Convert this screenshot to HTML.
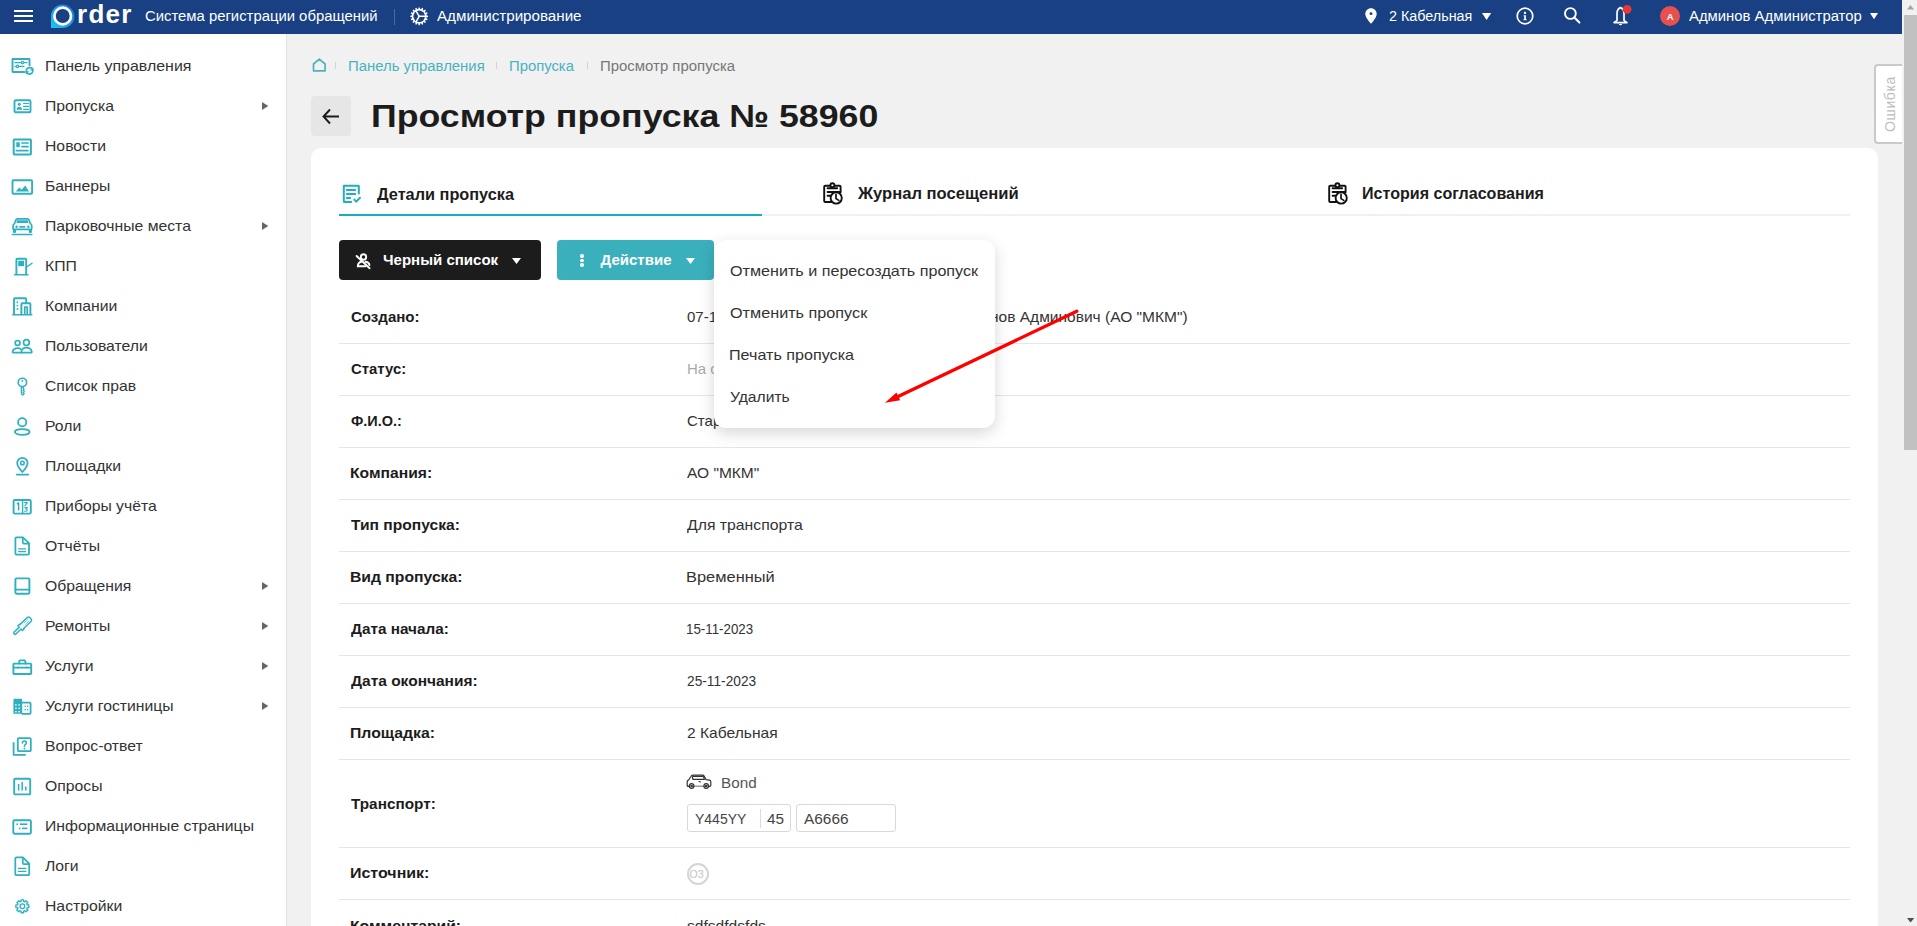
<!DOCTYPE html>
<html><head><meta charset="utf-8">
<style>
html,body{margin:0;padding:0;width:1917px;height:926px;overflow:hidden;background:#f1f1f1;font-family:"Liberation Sans",sans-serif;}
.t{position:absolute;white-space:nowrap;line-height:1;z-index:2;transform-origin:0 0;}
.abs{position:absolute;}
#hdr{position:absolute;left:0;top:0;width:1902px;height:34px;background:#184082;z-index:3;}
#side{position:absolute;left:0;top:34px;width:286px;height:892px;background:#fff;border-right:1px solid #e2e2e2;}
#card{position:absolute;left:311px;top:148px;width:1567px;height:800px;background:#fff;border-radius:10px;}
.sep{position:absolute;left:339px;width:1511px;height:1px;background:#e6e6e6;}
#dd{position:absolute;left:714px;top:240px;width:281px;height:188px;background:#fff;border-radius:12px;box-shadow:0 5px 16px rgba(0,0,0,0.16);z-index:5;}
svg{position:absolute;overflow:visible;}
</style></head><body>
<div id="hdr">
  <!-- hamburger -->
  <div class="abs" style="left:13.5px;top:9.5px;width:19px;height:2px;background:#fff"></div>
  <div class="abs" style="left:13.5px;top:15px;width:19px;height:2px;background:#fff"></div>
  <div class="abs" style="left:13.5px;top:20px;width:19px;height:2px;background:#fff"></div>
  <!-- logo -->
  <svg style="left:0;top:0" width="200" height="34">
    <defs><linearGradient id="lg" x1="0" y1="1" x2="1" y2="0"><stop offset="0" stop-color="#1ec8f0"/><stop offset="1" stop-color="#1a6fe0"/></linearGradient></defs>
    <path d="M51,28 L51,16 A11.7,11.7 0 1 1 62.7,28 Z" fill="url(#lg)"/>
    <circle cx="62.7" cy="16" r="8.3" fill="#184082" stroke="#fff" stroke-width="2.7"/>
  </svg>
  <div class="t" style="left:77px;top:0.8px;font-size:26px;font-weight:700;color:#fff;letter-spacing:1.3px;">rder</div>
  <!-- separator -->
  <div class="abs" style="left:393.5px;top:9px;width:1px;height:16px;background:#4a68a3"></div>
  <!-- gear -->
  <svg style="left:410px;top:7px" width="19" height="19" viewBox="0 0 19 19">
    <path d="M16.44,8.35 L18.08,8.68 L18.08,9.92 L16.44,10.25 L16.25,11.20 L17.64,12.12 L17.16,13.27 L15.53,12.94 L14.99,13.75 L15.92,15.14 L15.04,16.02 L13.65,15.09 L12.84,15.63 L13.17,17.26 L12.02,17.74 L11.10,16.35 L10.15,16.54 L9.82,18.18 L8.58,18.18 L8.25,16.54 L7.30,16.35 L6.38,17.74 L5.23,17.26 L5.56,15.63 L4.75,15.09 L3.36,16.02 L2.48,15.14 L3.41,13.75 L2.87,12.94 L1.24,13.27 L0.76,12.12 L2.15,11.20 L1.96,10.25 L0.32,9.92 L0.32,8.68 L1.96,8.35 L2.15,7.40 L0.76,6.48 L1.24,5.33 L2.87,5.66 L3.41,4.85 L2.48,3.46 L3.36,2.58 L4.75,3.51 L5.56,2.97 L5.23,1.34 L6.38,0.86 L7.30,2.25 L8.25,2.06 L8.58,0.42 L9.82,0.42 L10.15,2.06 L11.10,2.25 L12.02,0.86 L13.17,1.34 L12.84,2.97 L13.65,3.51 L15.04,2.58 L15.92,3.46 L14.99,4.85 L15.53,5.66 L17.16,5.33 L17.64,6.48 L16.25,7.40 Z" fill="#fff"/>
    <circle cx="9.2" cy="9.3" r="5.8" fill="#184082"/>
    <g stroke="#fff" stroke-width="1.5" stroke-linecap="round"><line x1="9.2" y1="9.3" x2="15" y2="9.3"/><line x1="9.2" y1="9.3" x2="6.3" y2="4.3"/><line x1="9.2" y1="9.3" x2="6.3" y2="14.3"/></g>
  </svg>
  <!-- pin -->
  <svg style="left:1365px;top:8px" width="12" height="16" viewBox="0 0 12 16">
    <path d="M6,0.3 C2.8,0.3 0.3,2.8 0.3,5.9 C0.3,9.8 6,15.7 6,15.7 C6,15.7 11.7,9.8 11.7,5.9 C11.7,2.8 9.2,0.3 6,0.3 Z M6,4.2 A1.45,1.45 0 1 1 6,7.1 A1.45,1.45 0 1 1 6,4.2 Z" fill="#fff" fill-rule="evenodd"/>
  </svg>
  <svg style="left:1481.8px;top:13px" width="10" height="8"><path d="M0,0 L9.2,0 L4.6,7 Z" fill="#fff"/></svg>
  <!-- info -->
  <svg style="left:1515.5px;top:6.5px" width="18" height="18" viewBox="0 0 18 18">
    <circle cx="9" cy="9" r="7.8" fill="none" stroke="#fff" stroke-width="1.7"/>
    <circle cx="9" cy="6" r="1.15" fill="#fff"/>
    <path d="M7.6,8.2 L9.9,8.2 L9.9,12.2 L10.7,12.2 L10.7,13.3 L7.4,13.3 L7.4,12.2 L8.2,12.2 L8.2,9.3 L7.6,9.3 Z" fill="#fff"/>
  </svg>
  <!-- search -->
  <svg style="left:1563px;top:6px" width="19" height="19" viewBox="0 0 19 19">
    <circle cx="7.4" cy="7.5" r="5.4" fill="none" stroke="#fff" stroke-width="1.9"/>
    <line x1="11.4" y1="11.6" x2="16.4" y2="16.6" stroke="#fff" stroke-width="2.1" stroke-linecap="round"/>
  </svg>
  <!-- bell -->
  <svg style="left:1611.5px;top:5px" width="22" height="22" viewBox="0 0 22 22">
    <path d="M8.5,2.6 Q5,3.8 5,8.5 L5,15.4 L2,17.6 L15,17.6 L12,15.4 L12,8.5 Q12,3.8 8.5,2.6 Z" fill="none" stroke="#fff" stroke-width="1.7" stroke-linejoin="round"/>
    <path d="M6.8,19 A1.8,1.8 0 0 0 10.2,19 Z" fill="#fff"/>
    <circle cx="15.1" cy="4.35" r="4.4" fill="#e8363a"/>
  </svg>
  <!-- avatar -->
  <div class="abs" style="left:1660px;top:6px;width:20px;height:20px;border-radius:50%;background:#e85050;"></div>
  <div class="t" style="left:1666.8px;top:11.5px;font-size:9.5px;font-weight:700;color:#fff;z-index:4">A</div>
  <svg style="left:1870px;top:13px" width="9" height="8"><path d="M0,0 L8,0 L4,6.2 Z" fill="#fff"/></svg>
</div>

<!-- scrollbar -->
<div class="abs" style="left:1902px;top:0;width:15px;height:926px;background:#f1f1f1;z-index:4"></div>
<div class="abs" style="left:1904px;top:15px;width:13px;height:435px;background:#c1c1c1;z-index:4"></div>
<svg style="left:1907px;top:4.5px;z-index:4" width="8" height="5"><path d="M0,4.5 L7,4.5 L3.5,0 Z" fill="#a3a3a3"/></svg>
<svg style="left:1907px;top:917.5px;z-index:4" width="8" height="5"><path d="M0,0 L7.2,0 L3.6,4.5 Z" fill="#505050"/></svg>

<!-- error tab -->
<div class="abs" style="left:1874px;top:64px;width:30px;height:76px;border:2px solid #c9c9c9;border-right:none;border-radius:4px 0 0 4px;background:#fff;z-index:3"></div>
<div class="t" style="left:1862px;top:97px;font-size:14px;color:#bdbdbd;transform:rotate(-90deg);transform-origin:50% 50%;width:56px;text-align:center;z-index:3;letter-spacing:0.6px">Ошибка</div>

<div id="side"></div>
<svg style="left:10px;top:53px" width="24" height="24" viewBox="0 0 24 24" fill="none" stroke="#2eb0bf" stroke-width="1.9" stroke-linecap="round" stroke-linejoin="round"><path d="M16.5,19 L3,19 Q2.5,19 2.5,18.5 L2.5,6.5 Q2.5,6 3,6 L19,6 Q19.5,6 19.5,6.5 L19.5,13"/>
<line x1="5" y1="9.6" x2="17" y2="9.6" stroke-width="1.3"/><circle cx="12.5" cy="9.6" r="1.2" fill="#fff" stroke-width="1.2"/>
<line x1="5" y1="13.4" x2="14" y2="13.4" stroke-width="1.3"/><circle cx="7.6" cy="13.4" r="1.2" fill="#fff" stroke-width="1.2"/>
<circle cx="19.5" cy="17.8" r="4.8" fill="#fff" stroke="none"/><path d="M16.3,17 A3.3,3.3 0 0 1 22.5,16.5 M22.7,18.6 A3.3,3.3 0 0 1 16.5,19.2" stroke-width="1.8"/>
<path d="M22.6,15 L23.2,17.3 L21,17" stroke-width="1.2"/><path d="M16.4,20.6 L15.8,18.3 L18,18.6" stroke-width="1.2"/></svg>
<svg style="left:10px;top:93px" width="24" height="24" viewBox="0 0 24 24" fill="none" stroke="#2eb0bf" stroke-width="1.9" stroke-linecap="round" stroke-linejoin="round"><rect x="4.5" y="7.3" width="16" height="12" rx="1.3"/>
<circle cx="9.3" cy="11.3" r="1.5" fill="#2eb0bf" stroke="none"/><path d="M6.5,16.8 Q6.8,13.7 9.3,13.7 Q11.8,13.7 12.1,16.8 Z" fill="#2eb0bf" stroke="none"/>
<line x1="13.6" y1="10.5" x2="18.4" y2="10.5" stroke-width="1.2"/><line x1="13.6" y1="13.4" x2="18.4" y2="13.4" stroke-width="1.2"/><line x1="13.6" y1="16.3" x2="18.4" y2="16.3" stroke-width="1.2"/></svg>
<svg style="left:10px;top:133px" width="24" height="24" viewBox="0 0 24 24" fill="none" stroke="#2eb0bf" stroke-width="1.9" stroke-linecap="round" stroke-linejoin="round"><rect x="3.7" y="6.5" width="17.2" height="15" rx="0.8" stroke-width="2"/>
<rect x="6.3" y="9.2" width="3.4" height="5" fill="#2eb0bf" stroke="none"/>
<line x1="12" y1="10" x2="18" y2="10" stroke-width="1.7"/><line x1="12" y1="13.6" x2="18" y2="13.6" stroke-width="1.7"/><line x1="6.3" y1="17.6" x2="18" y2="17.6" stroke-width="1.7"/></svg>
<svg style="left:10px;top:173px" width="24" height="24" viewBox="0 0 24 24" fill="none" stroke="#2eb0bf" stroke-width="1.9" stroke-linecap="round" stroke-linejoin="round"><rect x="2.5" y="7.2" width="19.6" height="13.6" rx="1"/>
<path d="M5.8,18.4 L9.3,14.4 L11.6,16.7 L15.2,12.4 L19,18.4 Z" fill="#2eb0bf" stroke="none"/></svg>
<svg style="left:10px;top:213px" width="24" height="24" viewBox="0 0 24 24" fill="none" stroke="#2eb0bf" stroke-width="1.9" stroke-linecap="round" stroke-linejoin="round"><path d="M5.2,16.4 L4,16.4 Q3.1,16.4 3.1,15.4 L3.1,12.6 Q3.1,11.2 4.4,10.8 L5.9,6.9 Q6.4,5.8 7.6,5.8 L17.2,5.8 Q18.4,5.8 18.9,6.9 L20.4,10.8 Q21.7,11.2 21.7,12.6 L21.7,15.4 Q21.7,16.4 20.8,16.4 Z" stroke-width="1.7"/>
<path d="M7.1,7.2 L17.7,7.2 L18.4,10 L6.4,10 Z" fill="#2eb0bf" stroke="none"/>
<circle cx="6.6" cy="13.8" r="1.25" fill="#2eb0bf" stroke="none"/><circle cx="18.3" cy="13.8" r="1.25" fill="#2eb0bf" stroke="none"/><rect x="9.3" y="13" width="5.9" height="1.7" fill="#2eb0bf" stroke="none"/>
<path d="M2.9,16 L6,16 L6,18.9 Q6,19.9 5,19.9 L3.9,19.9 Q2.9,19.9 2.9,18.9 Z" fill="#2eb0bf" stroke="none"/><path d="M18.8,16 L21.9,16 L21.9,18.9 Q21.9,19.9 20.9,19.9 L19.8,19.9 Q18.8,19.9 18.8,18.9 Z" fill="#2eb0bf" stroke="none"/>
<line x1="2.4" y1="21.5" x2="21.8" y2="21.5" stroke-width="1.6"/></svg>
<svg style="left:10px;top:253px" width="24" height="24" viewBox="0 0 24 24" fill="none" stroke="#2eb0bf" stroke-width="1.9" stroke-linecap="round" stroke-linejoin="round"><path d="M6.4,21.2 L6.4,6.8 Q6.4,5.8 7.4,5.8 L15.2,5.8 Q16.2,5.8 16.2,6.8 L16.2,21.2"/>
<rect x="8.2" y="7.7" width="5.8" height="5.5" fill="#2eb0bf" stroke="none"/>
<line x1="16.3" y1="14.3" x2="22" y2="10.2" stroke-width="1.4"/><line x1="4.6" y1="21.8" x2="18" y2="21.8" stroke-width="1.4"/></svg>
<svg style="left:10px;top:293px" width="24" height="24" viewBox="0 0 24 24" fill="none" stroke="#2eb0bf" stroke-width="1.9" stroke-linecap="round" stroke-linejoin="round"><path d="M4,21.3 L4,6.2 Q4,5.3 5,5.3 L15.3,5.3 Q16.2,5.3 16.2,6.2 L16.2,10"/>
<path d="M11.4,21.3 L11.4,11 Q11.4,10.2 12.2,10.2 L19.6,10.2 Q20.4,10.2 20.4,11 L20.4,21.3"/><path d="M14.8,21.3 L14.8,14 L17.2,14 L17.2,21.3" stroke-width="1.6"/>
<line x1="2.8" y1="21.8" x2="21.8" y2="21.8" stroke-width="1.4"/>
<circle cx="7.4" cy="9.2" r="0.9" fill="#2eb0bf" stroke="none"/><circle cx="7.4" cy="12.6" r="0.9" fill="#2eb0bf" stroke="none"/><circle cx="7.4" cy="16" r="0.9" fill="#2eb0bf" stroke="none"/></svg>
<svg style="left:10px;top:333px" width="24" height="24" viewBox="0 0 24 24" fill="none" stroke="#2eb0bf" stroke-width="1.9" stroke-linecap="round" stroke-linejoin="round"><circle cx="7.6" cy="9.9" r="2.4" stroke-width="1.7"/><path d="M11.4,19.6 L3.4,19.6 Q2.2,19.6 2.6,18.4 Q3.8,15.2 7.6,15.2 Q9.5,15.2 10.8,16" stroke-width="1.7"/>
<circle cx="16.4" cy="9.6" r="2.9" stroke-width="1.7"/><path d="M11.2,19.4 Q12,14.6 16.4,14.6 Q20.8,14.6 21.8,18.6 Q22,19.6 21,19.6 L12.2,19.6 Q11,19.6 11.2,19.4 Z" stroke-width="1.7"/></svg>
<svg style="left:10px;top:373px" width="24" height="24" viewBox="0 0 24 24" fill="none" stroke="#2eb0bf" stroke-width="1.9" stroke-linecap="round" stroke-linejoin="round"><circle cx="12.4" cy="9.4" r="4.2" stroke-width="1.6"/><circle cx="12.4" cy="8" r="0.9" fill="#2eb0bf" stroke="none"/>
<path d="M11.4,13.4 L11.4,20.8 L12.8,22 L14.2,20.6 L13.2,19.6 L14.2,18.6 L13.2,17.6 L14,16.4 L13.4,15.6 L13.4,13.4" stroke-width="1.4"/></svg>
<svg style="left:10px;top:413px" width="24" height="24" viewBox="0 0 24 24" fill="none" stroke="#2eb0bf" stroke-width="1.9" stroke-linecap="round" stroke-linejoin="round"><circle cx="12.2" cy="9.2" r="4.1" stroke-width="1.8"/><ellipse cx="12.2" cy="19" rx="7.4" ry="2.8" stroke-width="1.8"/></svg>
<svg style="left:10px;top:453px" width="24" height="24" viewBox="0 0 24 24" fill="none" stroke="#2eb0bf" stroke-width="1.9" stroke-linecap="round" stroke-linejoin="round"><path d="M12.4,19 Q7.2,13.5 7.2,10 A5.2,5.2 0 0 1 17.6,10 Q17.6,13.5 12.4,19 Z" stroke-width="1.8"/><circle cx="12.4" cy="10" r="1.8" stroke-width="1.5"/>
<line x1="6.6" y1="21.6" x2="18.4" y2="21.6" stroke-width="1.6"/></svg>
<svg style="left:10px;top:493px" width="24" height="24" viewBox="0 0 24 24" fill="none" stroke="#2eb0bf" stroke-width="1.9" stroke-linecap="round" stroke-linejoin="round"><rect x="3.6" y="7" width="17.2" height="13.6" rx="1.2" stroke-width="1.9"/><line x1="12.6" y1="7" x2="12.6" y2="20.6" stroke-width="1.4"/>
<path d="M7,11 L8.6,10 L8.6,17.6" stroke-width="1.5" stroke-linecap="butt"/><path d="M14.6,9.6 L17.4,9.6 L14.8,12.8 M14.8,14.6 L17.4,14.6 L15.8,16 Q17.6,16.4 17,17.8 Q16.2,18.6 14.6,18" stroke-width="1.1"/></svg>
<svg style="left:10px;top:533px" width="24" height="24" viewBox="0 0 24 24" fill="none" stroke="#2eb0bf" stroke-width="1.9" stroke-linecap="round" stroke-linejoin="round"><path d="M12.8,4.4 L6.6,4.4 Q5.4,4.4 5.4,5.6 L5.4,20.4 Q5.4,21.6 6.6,21.6 L17.8,21.6 Q19,21.6 19,20.4 L19,10.2 Z" stroke-width="1.8"/><path d="M12.8,4.6 L12.8,9.4 Q12.8,10.6 14,10.6 L18.8,10.6" stroke-width="1.7"/>
<line x1="8.6" y1="15.8" x2="15.6" y2="15.8" stroke-width="1.3"/><line x1="8.6" y1="18.6" x2="15.6" y2="18.6" stroke-width="1.3"/></svg>
<svg style="left:10px;top:573px" width="24" height="24" viewBox="0 0 24 24" fill="none" stroke="#2eb0bf" stroke-width="1.9" stroke-linecap="round" stroke-linejoin="round"><rect x="5.4" y="5.4" width="14" height="15.4" rx="1.2" stroke-width="1.9"/><line x1="5.4" y1="16.6" x2="19.4" y2="16.6" stroke-width="1.8"/></svg>
<svg style="left:10px;top:613px" width="24" height="24" viewBox="0 0 24 24" fill="none" stroke="#2eb0bf" stroke-width="1.9" stroke-linecap="round" stroke-linejoin="round"><g transform="translate(12.2,13.15) rotate(-43.7)"><path d="M-11.2,0 Q-11.2,-1.3 -9.9,-1.3 L-2.8,-1.3 L-2.8,-3.3 L-0.6,-3.3 L-0.6,-2.7 L9.3,-2.7 Q11.3,-2.7 11.3,-0.7 L11.3,0.7 Q11.3,2.7 9.3,2.7 L-0.6,2.7 L-0.6,3.3 L-2.8,3.3 L-2.8,1.3 L-9.9,1.3 Q-11.2,1.3 -11.2,0 Z" stroke-width="1.45"/>
<path d="M3.6,-1 L8.4,-1 M3.6,1 L8.4,1" stroke-width="0.9" stroke-dasharray="1,0.8" opacity="0.75"/></g></svg>
<svg style="left:10px;top:653px" width="24" height="24" viewBox="0 0 24 24" fill="none" stroke="#2eb0bf" stroke-width="1.9" stroke-linecap="round" stroke-linejoin="round"><path d="M9.2,10.6 L9.2,8.4 Q9.2,7.4 10.2,7.4 L14.4,7.4 Q15.4,7.4 15.4,8.4 L15.4,10.6" stroke-width="1.8"/><rect x="3.4" y="10.6" width="17.8" height="10.4" rx="0.8" stroke-width="1.9"/>
<line x1="3.4" y1="14.6" x2="21.2" y2="14.6" stroke-width="1.6"/><circle cx="8" cy="14.6" r="1" fill="#2eb0bf" stroke="none"/><circle cx="16.6" cy="14.6" r="1" fill="#2eb0bf" stroke="none"/></svg>
<svg style="left:10px;top:693px" width="24" height="24" viewBox="0 0 24 24" fill="none" stroke="#2eb0bf" stroke-width="1.9" stroke-linecap="round" stroke-linejoin="round"><path d="M3.4,20.8 L3.4,7 Q3.4,5.8 4.6,5.8 L11,5.8 Q12.2,5.8 12.2,7 L12.2,20.8 Z" fill="#2eb0bf" stroke="none"/>
<path d="M12.2,9.6 L19.6,9.6 Q20.6,9.6 20.6,10.6 L20.6,19.8 Q20.6,20.8 19.6,20.8 L12.2,20.8" stroke-width="1.8"/>
<g fill="#fff" stroke="none"><rect x="5.2" y="11.2" width="1.4" height="1.4"/><rect x="8.4" y="11.2" width="1.4" height="1.4"/><rect x="5.2" y="14.6" width="1.4" height="1.4"/><rect x="8.4" y="14.6" width="1.4" height="1.4"/><rect x="5.2" y="18" width="1.4" height="1.4"/><rect x="8.4" y="18" width="1.4" height="1.4"/></g>
<g fill="#2eb0bf" stroke="none"><rect x="14.6" y="12.6" width="1.3" height="1.3"/><rect x="17" y="12.6" width="1.3" height="1.3"/><rect x="14.6" y="16" width="1.3" height="1.3"/><rect x="17" y="16" width="1.3" height="1.3"/></g></svg>
<svg style="left:10px;top:733px" width="24" height="24" viewBox="0 0 24 24" fill="none" stroke="#2eb0bf" stroke-width="1.9" stroke-linecap="round" stroke-linejoin="round"><rect x="7.8" y="5.2" width="13" height="13" rx="1" stroke-width="1.8"/><path d="M3.6,9.2 L3.6,21.8 L15.8,21.8" stroke-width="1.8" stroke-linecap="butt"/>
<path d="M12.4,10 Q12.6,8 14.4,8 Q16.4,8 16.4,9.8 Q16.4,11 15,11.8 Q14.4,12.2 14.4,13.4" stroke-width="1.6"/><circle cx="14.4" cy="15.6" r="0.95" fill="#2eb0bf" stroke="none"/></svg>
<svg style="left:10px;top:773px" width="24" height="24" viewBox="0 0 24 24" fill="none" stroke="#2eb0bf" stroke-width="1.9" stroke-linecap="round" stroke-linejoin="round"><rect x="4.2" y="5.8" width="16" height="15.6" rx="1" stroke-width="1.9"/><line x1="8.6" y1="11" x2="8.6" y2="17.6" stroke-width="1.5" stroke-linecap="butt"/><line x1="12.2" y1="9" x2="12.2" y2="17.6" stroke-width="1.5" stroke-linecap="butt"/><line x1="15.8" y1="13.6" x2="15.8" y2="17.6" stroke-width="1.5" stroke-linecap="butt"/></svg>
<svg style="left:10px;top:813px" width="24" height="24" viewBox="0 0 24 24" fill="none" stroke="#2eb0bf" stroke-width="1.9" stroke-linecap="round" stroke-linejoin="round"><rect x="3.3" y="7.3" width="17.6" height="13.4" rx="1.2" stroke-width="1.9"/><circle cx="7.2" cy="11.2" r="0.9" fill="#2eb0bf" stroke="none"/><line x1="9.8" y1="11.2" x2="17.4" y2="11.2" stroke-width="1.6" stroke-linecap="butt"/>
<circle cx="9.6" cy="15.4" r="0.9" fill="#2eb0bf" stroke="none"/><line x1="12" y1="15.4" x2="17.4" y2="15.4" stroke-width="1.6" stroke-linecap="butt"/></svg>
<svg style="left:10px;top:853px" width="24" height="24" viewBox="0 0 24 24" fill="none" stroke="#2eb0bf" stroke-width="1.9" stroke-linecap="round" stroke-linejoin="round"><path d="M12.8,4.35 L6.6,4.35 Q5.3,4.35 5.3,5.65 L5.3,20.9 Q5.3,22.2 6.6,22.2 L17.9,22.2 Q19.2,22.2 19.2,20.9 L19.2,10.7 Z" stroke-width="1.75"/><path d="M12.8,4.6 L12.8,10 Q12.8,11.2 14,11.2 L19,11.2" stroke-width="1.7"/>
<line x1="8.4" y1="15.4" x2="15.8" y2="15.4" stroke-width="1.3"/><line x1="8.4" y1="18.4" x2="15.8" y2="18.4" stroke-width="1.3"/></svg>
<svg style="left:10px;top:893px" width="24" height="24" viewBox="0 0 24 24" fill="none" stroke="#2eb0bf" stroke-width="1.9" stroke-linecap="round" stroke-linejoin="round"><path d="M11.03,8.45 L11.05,6.80 L13.67,6.80 L13.69,8.45 L14.82,8.92 L16.01,7.77 L17.86,9.62 L16.71,10.81 L17.18,11.94 L18.83,11.96 L18.83,14.58 L17.18,14.60 L16.71,15.73 L17.86,16.92 L16.01,18.77 L14.82,17.62 L13.69,18.09 L13.67,19.74 L11.05,19.74 L11.03,18.09 L9.90,17.62 L8.71,18.77 L6.86,16.92 L8.01,15.73 L7.54,14.60 L5.89,14.58 L5.89,11.96 L7.54,11.94 L8.01,10.81 L6.86,9.62 L8.71,7.77 L9.90,8.92 Z" stroke-width="1.35"/><circle cx="12.36" cy="13.27" r="2.35" stroke-width="1.35"/></svg>
<svg style="left:262px;top:102px" width="7" height="8"><path d="M0,0 L6.3,4 L0,8 Z" fill="#666"/></svg>
<svg style="left:262px;top:222px" width="7" height="8"><path d="M0,0 L6.3,4 L0,8 Z" fill="#666"/></svg>
<svg style="left:262px;top:582px" width="7" height="8"><path d="M0,0 L6.3,4 L0,8 Z" fill="#666"/></svg>
<svg style="left:262px;top:622px" width="7" height="8"><path d="M0,0 L6.3,4 L0,8 Z" fill="#666"/></svg>
<svg style="left:262px;top:662px" width="7" height="8"><path d="M0,0 L6.3,4 L0,8 Z" fill="#666"/></svg>
<svg style="left:262px;top:702px" width="7" height="8"><path d="M0,0 L6.3,4 L0,8 Z" fill="#666"/></svg>
<div id="card"></div>

<!-- breadcrumb -->
<svg style="left:312px;top:58px" width="15" height="14" viewBox="0 0 15 14">
  <path d="M1.5,12.8 L1.5,6 L7.3,1.2 L13.1,6 L13.1,12.8 Z" fill="none" stroke="#49b2bf" stroke-width="1.7" stroke-linejoin="round"/>
</svg>
<div class="abs" style="left:335px;top:62px;width:1px;height:7px;background:#d3d3d3"></div>
<div class="abs" style="left:496px;top:62px;width:1px;height:7px;background:#d3d3d3"></div>
<div class="abs" style="left:587px;top:62px;width:1px;height:7px;background:#d3d3d3"></div>

<!-- back button -->
<div class="abs" style="left:311px;top:96px;width:40px;height:40px;border-radius:4px;background:#e6e6e6"></div>
<svg style="left:322px;top:108px" width="18" height="18" viewBox="0 0 18 18">
  <path d="M8,1.5 L1.5,8.5 L8,15.5 M1.5,8.5 L17,8.5" fill="none" stroke="#1c1c1c" stroke-width="1.9"/>
</svg>

<!-- tabs -->
<div class="abs" style="left:339px;top:213.5px;width:423px;height:2.2px;background:#17aebf;z-index:2"></div>
<div class="abs" style="left:762px;top:214px;width:1088px;height:2px;background:#f0f0f0"></div>

<!-- buttons -->
<div class="abs" style="left:339px;top:240px;width:202px;height:40px;border-radius:4px;background:#1c1c1c"></div>
<div class="abs" style="left:557px;top:240px;width:157px;height:40px;border-radius:4px;background:#3ab0bd"></div>
<svg style="left:511.5px;top:257.5px" width="9" height="6"><path d="M0,0 L9,0 L4.5,6 Z" fill="#fff"/></svg>
<svg style="left:686px;top:257.5px" width="9" height="6"><path d="M0,0 L9,0 L4.5,6 Z" fill="#fff"/></svg>
<div class="abs" style="left:580px;top:254px;width:3.5px;height:3.5px;border-radius:50%;background:#fff"></div>
<div class="abs" style="left:580px;top:258.5px;width:3.5px;height:3.5px;border-radius:50%;background:#fff"></div>
<div class="abs" style="left:580px;top:263px;width:3.5px;height:3.5px;border-radius:50%;background:#fff"></div>

<!-- table separators -->
<div class="sep" style="top:343px"></div>
<div class="sep" style="top:395px"></div>
<div class="sep" style="top:447px"></div>
<div class="sep" style="top:499px"></div>
<div class="sep" style="top:551px"></div>
<div class="sep" style="top:603px"></div>
<div class="sep" style="top:655px"></div>
<div class="sep" style="top:707px"></div>
<div class="sep" style="top:759px"></div>
<div class="sep" style="top:847px"></div>
<div class="sep" style="top:899px"></div>

<!-- plates -->
<div class="abs" style="left:687px;top:804px;width:102px;height:26px;border:1px solid #d9d9d9;border-radius:3px;background:#fff"></div>
<div class="abs" style="left:760px;top:809px;width:1px;height:19px;background:#dcdcdc;z-index:2"></div>
<div class="abs" style="left:796px;top:804px;width:98px;height:26px;border:1px solid #d9d9d9;border-radius:3px;background:#fff"></div>
<!-- source circle -->
<div class="abs" style="left:687px;top:863px;width:18px;height:18px;border:2px solid #d5d5d5;border-radius:50%;"></div>
<div class="t" style="left:689.6px;top:868.5px;font-size:10.5px;color:#c4c4c4;font-weight:400;letter-spacing:-0.3px">ОЗ</div>


<!-- tab icons -->
<svg style="left:336px;top:178px" width="30" height="30" viewBox="0 0 30 30" fill="none" stroke="#1fb0c0" stroke-width="2" stroke-linecap="round" stroke-linejoin="round">
  <path d="M15.2,24 L8.2,24 Q7.8,24 7.8,23.6 L7.8,8.2 Q7.8,7.8 8.2,7.8 L22.4,7.8 Q22.8,7.8 22.8,8.2 L22.8,15.6"/>
  <line x1="10.8" y1="12" x2="19.2" y2="12"/><line x1="10.8" y1="15.9" x2="19.2" y2="15.9"/><line x1="10.8" y1="19.9" x2="14.2" y2="19.9"/>
  <path d="M18.4,21.6 L20.2,23.6 L24,19.8"/>
</svg>
<svg style="left:818px;top:178px" width="30" height="30" viewBox="0 0 30 30" fill="none" stroke="#111" stroke-width="1.9" stroke-linecap="round" stroke-linejoin="round">
  <path d="M13.2,24 L7.2,24 Q6.2,24 6.2,23 L6.2,8.8 Q6.2,7.8 7.2,7.8 L21.6,7.8 Q22.6,7.8 22.6,8.8 L22.6,14.2"/>
  <circle cx="14.4" cy="7.2" r="2" fill="#fff"/>
  <line x1="9.6" y1="10.2" x2="19.2" y2="10.2"/><line x1="9.6" y1="14" x2="21.6" y2="14"/><line x1="9.6" y1="17.8" x2="13.2" y2="17.8"/>
  <circle cx="18.2" cy="20" r="5.6" fill="#fff"/><path d="M18,16.4 L18,20.6 L20.8,22.4" stroke-width="1.7"/>
</svg>
<svg style="left:1322.5px;top:178px" width="30" height="30" viewBox="0 0 30 30" fill="none" stroke="#111" stroke-width="1.9" stroke-linecap="round" stroke-linejoin="round">
  <path d="M13.2,24 L7.2,24 Q6.2,24 6.2,23 L6.2,8.8 Q6.2,7.8 7.2,7.8 L21.6,7.8 Q22.6,7.8 22.6,8.8 L22.6,14.2"/>
  <circle cx="14.4" cy="7.2" r="2" fill="#fff"/>
  <line x1="9.6" y1="10.2" x2="19.2" y2="10.2"/><line x1="9.6" y1="14" x2="21.6" y2="14"/><line x1="9.6" y1="17.8" x2="13.2" y2="17.8"/>
  <circle cx="18.2" cy="20" r="5.6" fill="#fff"/><path d="M18,16.4 L18,20.6 L20.8,22.4" stroke-width="1.7"/>
</svg>
<!-- blacklist icon -->
<svg style="left:350px;top:248px" width="26" height="26" viewBox="0 0 26 26" fill="none" stroke="#fff" stroke-width="1.9" stroke-linecap="round" stroke-linejoin="round">
  <circle cx="13.5" cy="9" r="2.7"/>
  <path d="M7.8,18.2 Q8,14.4 11.4,13.8 M15.6,13.8 Q19.2,14.4 19.4,17" /><path d="M7.8,18.3 L15.6,18.3"/>
  <line x1="6.6" y1="8" x2="19.6" y2="20.2"/>
</svg>
<!-- car icon -->
<svg style="left:682px;top:766px" width="32" height="26" viewBox="0 0 32 26" fill="none" stroke="#333" stroke-width="1.2" stroke-linecap="round" stroke-linejoin="round">
  <path d="M7.4,20.4 L6,20.4 Q5.2,20.4 5.2,19.4 L5.2,15.4 Q5.4,14.2 6.8,13.8 L8.6,11 Q9.4,9.2 11,9.2 L20.2,9.2 Q21.6,9.2 22.4,10.4 L24,13.6 L27.6,14.2 Q28.8,14.5 28.8,15.8 L28.8,19.2 Q28.8,20.4 27.8,20.4 L26.4,20.4"/>
  <path d="M11.8,20.2 L22,20.2" stroke="#999" stroke-width="1.6"/>
  <path d="M10.8,13.4 L10.4,11.2 Q10.6,10.4 11.6,10.4 L20.4,10.4 Q21.4,10.4 21.8,11.4 L22.4,13.4 Z"/>
  <circle cx="9.6" cy="20" r="2.3"/><circle cx="9.6" cy="20" r="0.7" fill="#333"/>
  <circle cx="24.2" cy="20" r="2.3"/><circle cx="24.2" cy="20" r="0.7" fill="#333"/>
  <path d="M16.8,15.4 L18.6,16" stroke-width="1"/>
</svg>

<div id="dd"></div>

<div class="t" id="t0" style="left:145.00px;top:9.00px;font-size:14px;font-weight:400;color:#fff;transform:scaleX(1.0607);z-index:4;">Система регистрации обращений</div>
<div class="t" id="t1" style="left:437.00px;top:9.00px;font-size:14px;font-weight:400;color:#fff;transform:scaleX(1.0827);z-index:4;">Администрирование</div>
<div class="t" id="t2" style="left:1388.50px;top:9.00px;font-size:14px;font-weight:400;color:#fff;transform:scaleX(1.0247);z-index:4;">2 Кабельная</div>
<div class="t" id="t3" style="left:1689.00px;top:9.00px;font-size:14px;font-weight:400;color:#fff;transform:scaleX(1.0613);z-index:4;">Админов Администратор</div>
<div class="t" id="t4" style="left:45.44px;top:58.00px;font-size:15px;font-weight:400;color:#333;transform:scaleX(1.0625);">Панель управления</div>
<div class="t" id="t5" style="left:45.00px;top:98.00px;font-size:15px;font-weight:400;color:#333;transform:scaleX(1.0500);">Пропуска</div>
<div class="t" id="t6" style="left:45.00px;top:138.00px;font-size:15px;font-weight:400;color:#333;transform:scaleX(1.0500);">Новости</div>
<div class="t" id="t7" style="left:45.00px;top:178.00px;font-size:15px;font-weight:400;color:#333;transform:scaleX(1.0500);">Баннеры</div>
<div class="t" id="t8" style="left:45.00px;top:218.00px;font-size:15px;font-weight:400;color:#333;transform:scaleX(1.0500);">Парковочные места</div>
<div class="t" id="t9" style="left:45.00px;top:258.00px;font-size:15px;font-weight:400;color:#333;transform:scaleX(1.0500);">КПП</div>
<div class="t" id="t10" style="left:45.00px;top:298.00px;font-size:15px;font-weight:400;color:#333;transform:scaleX(1.0500);">Компании</div>
<div class="t" id="t11" style="left:45.00px;top:338.00px;font-size:15px;font-weight:400;color:#333;transform:scaleX(1.0500);">Пользователи</div>
<div class="t" id="t12" style="left:45.00px;top:378.00px;font-size:15px;font-weight:400;color:#333;transform:scaleX(1.0500);">Список прав</div>
<div class="t" id="t13" style="left:45.00px;top:418.00px;font-size:15px;font-weight:400;color:#333;transform:scaleX(1.0500);">Роли</div>
<div class="t" id="t14" style="left:45.00px;top:458.00px;font-size:15px;font-weight:400;color:#333;transform:scaleX(1.0500);">Площадки</div>
<div class="t" id="t15" style="left:45.00px;top:498.00px;font-size:15px;font-weight:400;color:#333;transform:scaleX(1.0500);">Приборы учёта</div>
<div class="t" id="t16" style="left:45.00px;top:538.00px;font-size:15px;font-weight:400;color:#333;transform:scaleX(1.0500);">Отчёты</div>
<div class="t" id="t17" style="left:45.00px;top:578.00px;font-size:15px;font-weight:400;color:#333;transform:scaleX(1.0500);">Обращения</div>
<div class="t" id="t18" style="left:45.00px;top:618.00px;font-size:15px;font-weight:400;color:#333;transform:scaleX(1.0500);">Ремонты</div>
<div class="t" id="t19" style="left:45.00px;top:658.00px;font-size:15px;font-weight:400;color:#333;transform:scaleX(1.0500);">Услуги</div>
<div class="t" id="t20" style="left:45.00px;top:698.00px;font-size:15px;font-weight:400;color:#333;transform:scaleX(1.0500);">Услуги гостиницы</div>
<div class="t" id="t21" style="left:45.00px;top:738.00px;font-size:15px;font-weight:400;color:#333;transform:scaleX(1.0500);">Вопрос-ответ</div>
<div class="t" id="t22" style="left:45.00px;top:778.00px;font-size:15px;font-weight:400;color:#333;transform:scaleX(1.0500);">Опросы</div>
<div class="t" id="t23" style="left:45.00px;top:818.00px;font-size:15px;font-weight:400;color:#333;transform:scaleX(1.0500);">Информационные страницы</div>
<div class="t" id="t24" style="left:45.00px;top:858.00px;font-size:15px;font-weight:400;color:#333;transform:scaleX(1.0500);">Логи</div>
<div class="t" id="t25" style="left:45.00px;top:898.00px;font-size:15px;font-weight:400;color:#333;transform:scaleX(1.0500);">Настройки</div>
<div class="t" id="t26" style="left:347.64px;top:59.00px;font-size:14px;font-weight:400;color:#49b2bf;transform:scaleX(1.0630);">Панель управления</div>
<div class="t" id="t27" style="left:509.14px;top:59.00px;font-size:14px;font-weight:400;color:#49b2bf;transform:scaleX(1.0590);">Пропуска</div>
<div class="t" id="t28" style="left:600.13px;top:59.00px;font-size:14px;font-weight:400;color:#777;transform:scaleX(1.0667);">Просмотр пропуска</div>
<div class="t" id="t29" style="left:371.27px;top:100.00px;font-size:32px;font-weight:700;color:#1c1c1c;transform:scaleX(1.1164);">Просмотр пропуска № 58960</div>
<div class="t" id="t30" style="left:376.60px;top:187.00px;font-size:16px;font-weight:700;color:#1c1c1c;transform:scaleX(1.0178);">Детали пропуска</div>
<div class="t" id="t31" style="left:858.00px;top:186.00px;font-size:16px;font-weight:700;color:#1c1c1c;transform:scaleX(1.0370);">Журнал посещений</div>
<div class="t" id="t32" style="left:1361.60px;top:186.00px;font-size:16px;font-weight:700;color:#1c1c1c;transform:scaleX(1.0039);">История согласования</div>
<div class="t" id="t33" style="left:382.80px;top:252.00px;font-size:15px;font-weight:700;color:#fff;transform:scaleX(1.0017);">Черный список</div>
<div class="t" id="t34" style="left:600.60px;top:252.00px;font-size:15px;font-weight:700;color:#fff;">Действие</div>
<div class="t" id="t35" style="left:351.30px;top:309.00px;font-size:15px;font-weight:700;color:#1c1c1c;transform:scaleX(1.0030);">Создано:</div>
<div class="t" id="t36" style="left:351.30px;top:361.00px;font-size:15px;font-weight:700;color:#1c1c1c;transform:scaleX(0.9926);">Статус:</div>
<div class="t" id="t37" style="left:351.30px;top:413.00px;font-size:15px;font-weight:700;color:#1c1c1c;transform:scaleX(0.9635);">Ф.И.О.:</div>
<div class="t" id="t38" style="left:350.26px;top:465.00px;font-size:15px;font-weight:700;color:#1c1c1c;transform:scaleX(1.0442);">Компания:</div>
<div class="t" id="t39" style="left:351.30px;top:517.00px;font-size:15px;font-weight:700;color:#1c1c1c;transform:scaleX(1.0404);">Тип пропуска:</div>
<div class="t" id="t40" style="left:350.25px;top:569.00px;font-size:15px;font-weight:700;color:#1c1c1c;transform:scaleX(1.0476);">Вид пропуска:</div>
<div class="t" id="t41" style="left:351.30px;top:621.00px;font-size:15px;font-weight:700;color:#1c1c1c;transform:scaleX(1.0200);">Дата начала:</div>
<div class="t" id="t42" style="left:351.30px;top:673.00px;font-size:15px;font-weight:700;color:#1c1c1c;transform:scaleX(1.0328);">Дата окончания:</div>
<div class="t" id="t43" style="left:350.25px;top:725.00px;font-size:15px;font-weight:700;color:#1c1c1c;transform:scaleX(1.0506);">Площадка:</div>
<div class="t" id="t44" style="left:351.30px;top:796.00px;font-size:15px;font-weight:700;color:#1c1c1c;transform:scaleX(1.0207);">Транспорт:</div>
<div class="t" id="t45" style="left:350.23px;top:865.00px;font-size:15px;font-weight:700;color:#1c1c1c;transform:scaleX(1.0653);">Источник:</div>
<div class="t" id="t46" style="left:350.25px;top:918.00px;font-size:15px;font-weight:700;color:#1c1c1c;transform:scaleX(1.0481);">Комментарий:</div>
<div class="t" id="t47" style="left:687.00px;top:309.00px;font-size:15px;font-weight:400;color:#333;">07-11-2023 15:42 Админов Админ</div>
<div class="t" id="t48" style="left:990.47px;top:309.00px;font-size:15px;font-weight:400;color:#333;transform:scaleX(1.0344);">нов Админович (АО "МКМ")</div>
<div class="t" id="t49" style="left:687.00px;top:361.00px;font-size:15px;font-weight:400;color:#aaa;">На согласовании</div>
<div class="t" id="t50" style="left:687.00px;top:413.00px;font-size:15px;font-weight:400;color:#333;">Старостин Алексей</div>
<div class="t" id="t51" style="left:687.00px;top:465.00px;font-size:15px;font-weight:400;color:#333;transform:scaleX(1.0343);">АО "МКМ"</div>
<div class="t" id="t52" style="left:687.00px;top:517.00px;font-size:15px;font-weight:400;color:#333;transform:scaleX(1.0518);">Для транспорта</div>
<div class="t" id="t53" style="left:685.90px;top:569.00px;font-size:15px;font-weight:400;color:#333;transform:scaleX(1.0950);">Временный</div>
<div class="t" id="t54" style="left:686.11px;top:621.00px;font-size:15px;font-weight:400;color:#333;transform:scaleX(0.8878);">15-11-2023</div>
<div class="t" id="t55" style="left:687.00px;top:673.00px;font-size:15px;font-weight:400;color:#333;transform:scaleX(0.9147);">25-11-2023</div>
<div class="t" id="t56" style="left:687.00px;top:725.00px;font-size:15px;font-weight:400;color:#333;transform:scaleX(1.0395);">2 Кабельная</div>
<div class="t" id="t57" style="left:720.81px;top:776.00px;font-size:14px;font-weight:400;color:#555;transform:scaleX(1.0903);">Bond</div>
<div class="t" id="t58" style="left:695.00px;top:812.00px;font-size:14px;font-weight:400;color:#444;">Y445YY</div>
<div class="t" id="t59" style="left:766.60px;top:812.00px;font-size:14px;font-weight:400;color:#444;transform:scaleX(1.0933);">45</div>
<div class="t" id="t60" style="left:804.00px;top:812.00px;font-size:14px;font-weight:400;color:#444;transform:scaleX(1.1000);">A6666</div>
<div class="t" id="t61" style="left:687.00px;top:918.00px;font-size:15px;font-weight:400;color:#333;transform:scaleX(1.0395);">sdfsdfdsfds</div>
<div class="t" id="t62" style="left:730.20px;top:263.00px;font-size:15px;font-weight:400;color:#333;transform:scaleX(1.0753);z-index:6;">Отменить и пересоздать пропуск</div>
<div class="t" id="t63" style="left:730.20px;top:305.00px;font-size:15px;font-weight:400;color:#333;transform:scaleX(1.0803);z-index:6;">Отменить пропуск</div>
<div class="t" id="t64" style="left:729.12px;top:347.00px;font-size:15px;font-weight:400;color:#333;transform:scaleX(1.0750);z-index:6;">Печать пропуска</div>
<div class="t" id="t65" style="left:730.20px;top:389.00px;font-size:15px;font-weight:400;color:#333;transform:scaleX(1.0421);z-index:6;">Удалить</div>

<!-- red arrow -->
<svg style="left:0;top:0;z-index:10" width="1917" height="926">
  <line x1="1076.8" y1="311.3" x2="896" y2="397.5" stroke="#ff0000" stroke-width="3.3" stroke-linecap="round"/>
  <path d="M885,402.8 L896.5,392.4 L900.2,400.2 Z" fill="#ff0000"/>
</svg>
</body></html>
